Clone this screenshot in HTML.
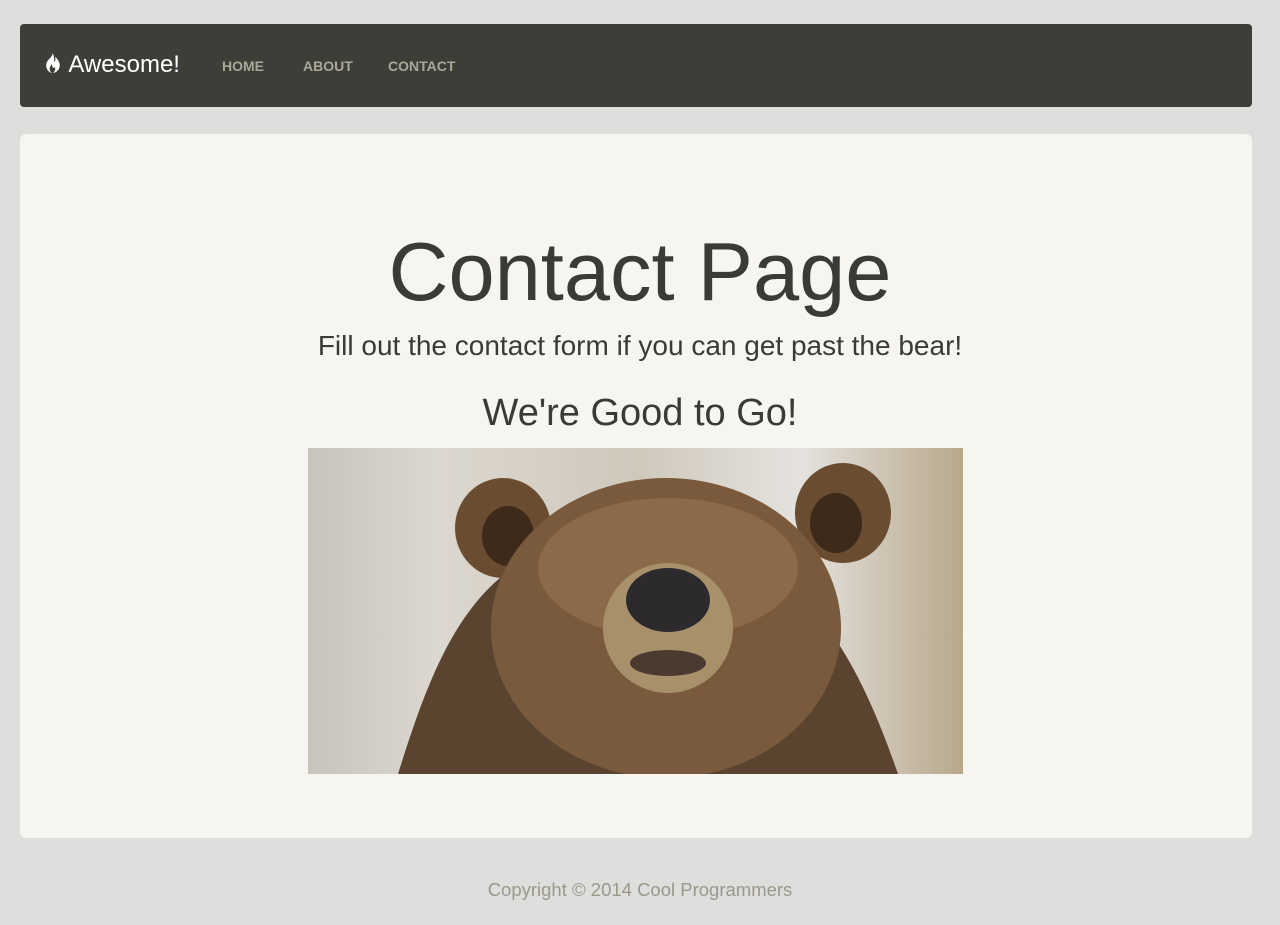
<!DOCTYPE html>
<html><head><style>
body{margin:0;background:#dededd;font-family:"Liberation Sans",sans-serif;width:1280px;height:925px;overflow:hidden;position:relative}
.nav{position:absolute;left:20px;top:24px;width:1232px;height:83px;background:#3e3e39;border-radius:4px}
.brand{position:absolute;color:#fff;font-size:24px;line-height:30px;transform:translateY(-15px)}
.nav a{position:absolute;top:34px;color:#a9a898;font-size:14px;font-weight:bold;text-decoration:none}
.main{position:absolute;left:20px;top:134px;width:1232px;height:704px;background:#f7f5f0;border-radius:6px}
h1{position:absolute;left:0;width:1280px;top:222px;margin:0;text-align:center;font-weight:normal;font-size:83px;color:#3a3a36;line-height:100px}
.p{position:absolute;left:0;width:1280px;top:330px;text-align:center;font-size:28px;color:#3a3a36}
h2{position:absolute;left:0;width:1280px;top:392px;margin:0;text-align:center;font-weight:normal;font-size:38px;color:#3a3a36}
.img{position:absolute;left:308px;top:448px;width:655px;height:326px;overflow:hidden;
background:linear-gradient(90deg,#c9c4bb,#dcd7cf 20%,#cfc8bb 50%,#e5e2de 75%,#b8a88c)}
.foot{position:absolute;left:0;width:1280px;top:879px;text-align:center;color:#9a9888;font-size:18.5px}
</style></head><body>
<div class="nav"></div>
<div class="brand" style="left:43px;top:65px"><svg width="20" height="22" viewBox="0 0 20 22" style="vertical-align:-2px"><path d="M9 0C11 4 6 6 4 10C2 14 4 20 9 21C5 18 7 14 9 12C9 16 11 17 12 15C13 18 11 20 10 21C16 20 18 14 16 10C15 8 14 6 12 5C13 8 12 10 11 10C12 6 10 2 9 0Z" fill="#fff"/></svg> Awesome!</div>
<div class="nav" style="background:none"><a style="left:202px">HOME</a><a style="left:283px">ABOUT</a><a style="left:368px">CONTACT</a></div>
<div class="main"></div>
<h1>Contact Page</h1>
<div class="p">Fill out the contact form if you can get past the bear!</div>
<h2>We're Good to Go!</h2>
<div class="img"><svg width="655" height="326">
<path d="M90 326C120 230 150 150 220 110L440 110C520 150 560 240 590 326Z" fill="#5a4430"/>
<ellipse cx="195" cy="80" rx="48" ry="50" fill="#6a4c30"/>
<ellipse cx="200" cy="88" rx="26" ry="30" fill="#3e2a1a"/>
<ellipse cx="535" cy="65" rx="48" ry="50" fill="#6a4c30"/>
<ellipse cx="528" cy="75" rx="26" ry="30" fill="#3e2a1a"/>
<ellipse cx="358" cy="180" rx="175" ry="150" fill="#7a5a3c"/>
<ellipse cx="360" cy="120" rx="130" ry="70" fill="#8a6a48"/>
<ellipse cx="360" cy="180" rx="65" ry="65" fill="#a8906a"/>
<ellipse cx="360" cy="152" rx="42" ry="32" fill="#2c2a2c"/>
<ellipse cx="360" cy="215" rx="38" ry="13" fill="#4a3a30"/>
</svg></div>
<div class="foot">Copyright © 2014 Cool Programmers</div>
</body></html>
